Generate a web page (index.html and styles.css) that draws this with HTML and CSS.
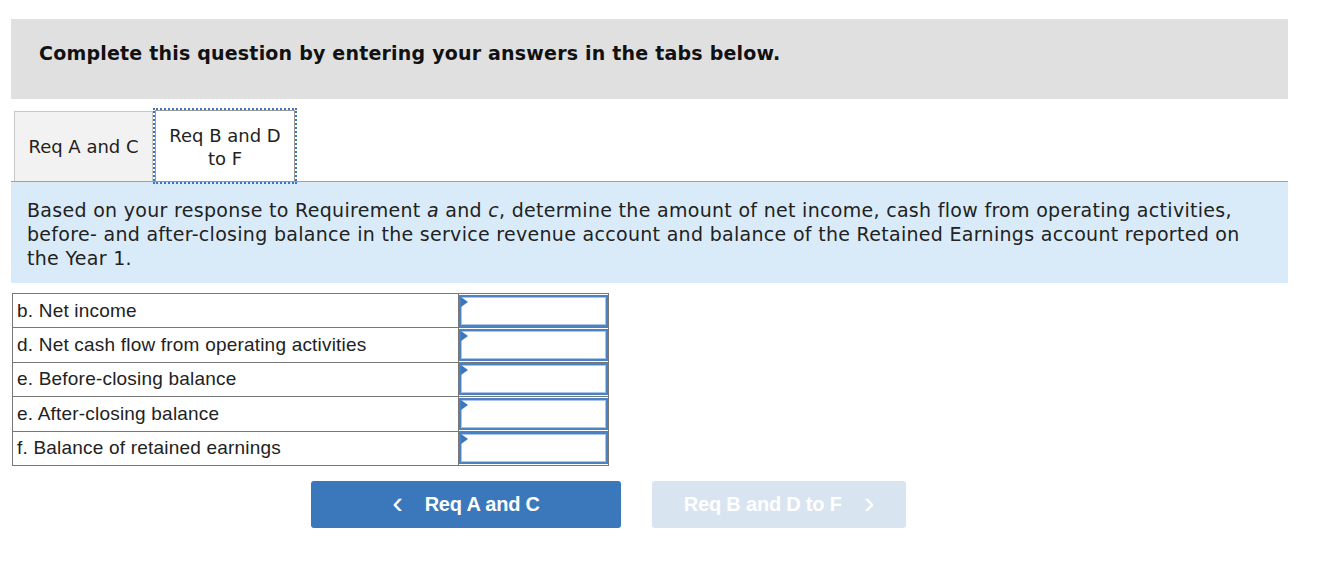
FILE: index.html
```html
<!DOCTYPE html>
<html>
<head>
<meta charset="utf-8">
<link rel="stylesheet" href="styles.css">
</head>
<body>
<div class="page">
  <div class="header">Complete this question by entering your answers in the tabs below.</div>
  <div class="tabs">
    <div class="tab">Req A and C</div>
    <div class="tab active">Req B and D<br>to F</div>
  </div>
  <div class="panel">Based on your response to Requirement <i>a</i> and <i>c</i>, determine the amount of net income, cash flow from operating activities, before- and after-closing balance in the service revenue account and balance of the Retained Earnings account reported on the Year 1.</div>
  <table class="grid">
    <tr><td class="label">b. Net income</td><td class="inp"><div class="box"></div></td></tr>
    <tr><td class="label">d. Net cash flow from operating activities</td><td class="inp"><div class="box"></div></td></tr>
    <tr><td class="label">e. Before-closing balance</td><td class="inp"><div class="box"></div></td></tr>
    <tr><td class="label">e. After-closing balance</td><td class="inp"><div class="box"></div></td></tr>
    <tr><td class="label">f. Balance of retained earnings</td><td class="inp"><div class="box"></div></td></tr>
  </table>
  <div class="nav">
    <div class="btn prev"><span class="chev">&#x2039;</span>Req A and C</div>
    <div class="btn next">Req B and D to F<span class="chev">&#x203A;</span></div>
  </div>
</div>
</body>
</html>
```
FILE: styles.css
```css
html, body { margin: 0; padding: 0; background: #fff; }
.page { padding: 19px 34px 0 11px; width: 1277px; }
.header {
  background: #e0e0e0;
  height: 80px;
  box-sizing: border-box;
  padding: 23px 0 0 28px;
  font-family: "DejaVu Sans", Verdana, sans-serif;
  font-weight: bold;
  font-size: 19px;
  letter-spacing: 0.2px;
  color: #111;
}
.tabs {
  display: flex;
  margin-top: 12px;
  padding-left: 3px;
  border-bottom: 1px solid #a0a0a0;
  height: 70px;
  align-items: flex-end;
}
.tab {
  box-sizing: border-box;
  height: 70px;
  display: flex;
  align-items: center;
  justify-content: center;
  text-align: center;
  font-family: "DejaVu Sans", Verdana, sans-serif;
  font-size: 18px;
  line-height: 23px;
  color: #222;
}
.tab:first-child {
  width: 139px;
  background: #f2f2f2;
  border: 1px solid #c8c8c8;
  border-bottom: none;
}
.tab.active {
  width: 140px;
  height: 72px;
  margin-left: 2px;
  margin-bottom: -1px;
  background: #fff;
  border: 1px solid #999;
  outline: 2px dotted #3a77c0;
  outline-offset: 0;
  padding-top: 2px;
}
.panel {
  background: #d9ebf9;
  height: 101px;
  box-sizing: border-box;
  padding: 16px 30px 0 16px;
  font-family: "DejaVu Sans", Verdana, sans-serif;
  font-size: 19px;
  letter-spacing: 0.3px;
  line-height: 24px;
  color: #222;
}
.grid {
  margin-top: 10px;
  margin-left: 1px;
  border-collapse: collapse;
  font-family: "Liberation Sans", Arial, sans-serif;
  font-size: 19px;
  letter-spacing: 0.2px;
  color: #222;
}
.grid td {
  border: 1px solid #777;
  height: 33.4px;
  padding: 0;
}
.label { width: 441px; padding-left: 4px !important; }
.inp { width: 149px; }
.box {
  height: 32px;
  box-sizing: border-box;
  border: 2px solid #4a82c4;
  box-shadow: inset 0 0 0 1px #a8c4e6;
  position: relative;
}
.box::before {
  content: "";
  position: absolute;
  left: 0;
  top: 0;
  border-left: 7px solid #3a77c0;
  border-top: 5px solid transparent;
  border-bottom: 5px solid transparent;
}
.nav {
  display: flex;
  gap: 31px;
  margin: 15px 0 0 300px;
}
.btn {
  height: 47px;
  border-radius: 3px;
  display: flex;
  align-items: center;
  justify-content: center;
  font-family: "Liberation Sans", Arial, sans-serif;
  font-weight: bold;
  font-size: 20px;
  letter-spacing: -0.2px;
  color: #fff;
}
.btn.prev { width: 310px; background: #3a77bb; }
.btn.next { width: 254px; background: #d9e4f1; }
.chev { font-size: 32px; font-weight: normal; line-height: 1; margin-top: -5px; }
.prev .chev { margin-right: 22px; }
.next .chev { margin-left: 22px; }
```
